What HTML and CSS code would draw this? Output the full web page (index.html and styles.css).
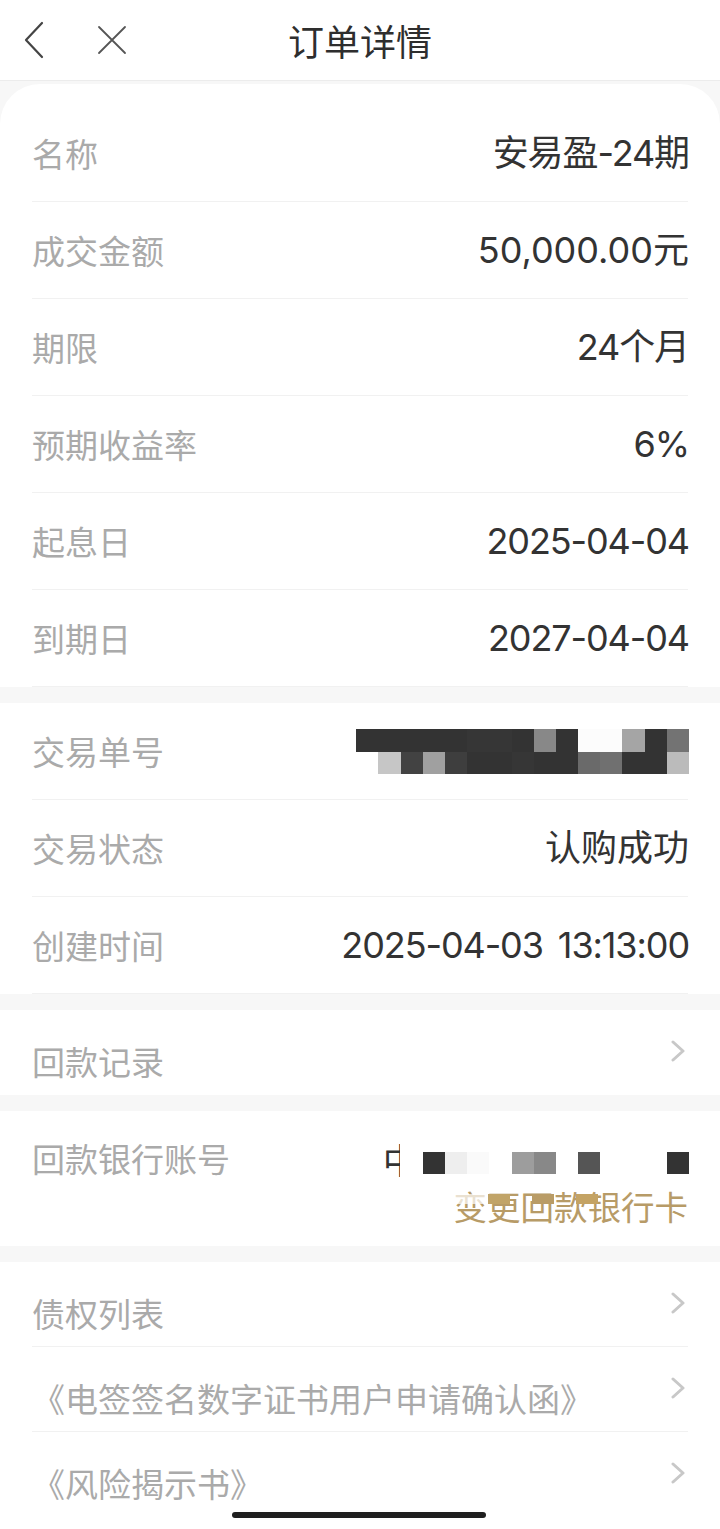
FILE: index.html
```html
<!DOCTYPE html>
<html lang="zh-CN">
<head>
<meta charset="UTF-8" />
<title>订单详情</title>
<link rel="stylesheet" href="styles.css">
</head>
<body>
<header class="nav">
  <div class="nav-left">
    <svg class="icon-back" width="22" height="38" viewBox="0 0 22 38"><path d="M19 2 L3 19 L19 36" fill="none" stroke="#444" stroke-width="2.2" stroke-linecap="round" stroke-linejoin="round"/></svg>
    <svg class="icon-close" width="30" height="30" viewBox="0 0 30 30"><path d="M2 2 L28 28 M28 2 L2 28" fill="none" stroke="#555" stroke-width="1.8" stroke-linecap="round"/></svg>
  </div>
  <h1 class="title">订单详情</h1>
  <div></div>
</header>

<section class="group card">
  <div class="row"><span class="label">名称</span><span class="value">安易盈-24期</span></div>
  <div class="row"><span class="label">成交金额</span><span class="value wide">50,000.00元</span></div>
  <div class="row"><span class="label">期限</span><span class="value">24个月</span></div>
  <div class="row"><span class="label">预期收益率</span><span class="value">6%</span></div>
  <div class="row"><span class="label">起息日</span><span class="value">2025-04-04</span></div>
  <div class="row"><span class="label">到期日</span><span class="value">2027-04-04</span></div>
</section>

<section class="group">
  <div class="row">
    <span class="label">交易单号</span>
    <div class="mosaic">
      <i class="c33"></i><i class="c33"></i><i class="c33"></i><i class="c33"></i><i class="c33"></i><i class="c36"></i><i class="c36"></i><i class="c33"></i><i class="c88"></i><i class="c33"></i><i class="cfc"></i><i class="cfc"></i><i class="ca5"></i><i class="c33"></i><i class="c73"></i>
      <i></i><i class="cc6"></i><i class="c42"></i><i class="ca0"></i><i class="c3e"></i><i class="c33"></i><i class="c33"></i><i class="c36"></i><i class="c33"></i><i class="c33"></i><i class="c6a"></i><i class="c70"></i><i class="c33"></i><i class="c33"></i><i class="cbb"></i>
    </div>
  </div>
  <div class="row"><span class="label">交易状态</span><span class="value cjk">认购成功</span></div>
  <div class="row"><span class="label">创建时间</span><span class="value">2025-04-03 13:13:00</span></div>
</section>

<section class="group">
  <div class="link"><span class="label">回款记录</span><svg class="arrow" width="16" height="22" viewBox="0 0 16 22"><path d="M3 2 L13 11 L3 20" fill="none" stroke="#c8c8c8" stroke-width="3" stroke-linecap="round" stroke-linejoin="round"/></svg></div>
</section>

<section class="group">
  <div class="bank">
    <span class="label">回款银行账号</span>
    <div class="bank-value">
      <div class="acct">
        <span class="clip">中</span>
        <div class="mosaic small">
          <i class="c33"></i><i class="cee"></i><i class="cfa"></i><i></i><i class="c9d"></i><i class="c88"></i><i></i><i class="c55"></i><i></i><i></i><i></i><i class="c33"></i>
        </div>
      </div>
      <div class="change">
        <span>变更回款银行卡</span>
        <div class="smudge"><i class="w"></i><i class="g1"></i><i></i><i class="g2"></i><i></i><i class="g3"></i></div>
      </div>
    </div>
  </div>
</section>

<section class="group last">
  <div class="link"><span class="label">债权列表</span><svg class="arrow" width="16" height="22" viewBox="0 0 16 22"><path d="M3 2 L13 11 L3 20" fill="none" stroke="#c8c8c8" stroke-width="3" stroke-linecap="round" stroke-linejoin="round"/></svg></div>
  <div class="link"><span class="label">《电签签名数字证书用户申请确认函》</span><svg class="arrow" width="16" height="22" viewBox="0 0 16 22"><path d="M3 2 L13 11 L3 20" fill="none" stroke="#c8c8c8" stroke-width="3" stroke-linecap="round" stroke-linejoin="round"/></svg></div>
  <div class="link"><span class="label">《风险揭示书》</span><svg class="arrow" width="16" height="22" viewBox="0 0 16 22"><path d="M3 2 L13 11 L3 20" fill="none" stroke="#c8c8c8" stroke-width="3" stroke-linecap="round" stroke-linejoin="round"/></svg></div>
</section>

<div class="home-bar"></div>
</body>
</html>
```

FILE: styles.css
```css
body { margin: 0; background: #f7f7f7; font-family: "Inter", "Noto Sans CJK SC", sans-serif; color: #333; }

.nav { display: grid; grid-template-columns: 1fr auto 1fr; align-items: center; height: 81px; background: #fff; border-bottom: 1px solid #ececec; box-sizing: border-box; }
.nav-left { display: flex; align-items: center; padding-left: 23px; }
.icon-close { margin-left: 52px; }
.title { margin: 0; font-family: "Noto Sans CJK SC", sans-serif; font-size: 36px; font-weight: 400; color: #2e2e2e; line-height: 40px; }

.group { background: #fff; margin-top: 16px; padding: 0 32px; }
.card { margin-top: 3px; padding-top: 21px; border-radius: 40px 40px 0 0; }
.last { padding-bottom: 12px; }

.row { display: flex; justify-content: space-between; align-items: center; height: 97px; border-bottom: 1px solid #f1f1f1; box-sizing: border-box; }

.label { font-family: "Noto Sans CJK SC", sans-serif; font-size: 33px; line-height: 40px; color: #aaa; }
.value { font-size: 36px; line-height: 40px; color: #333; letter-spacing: -1.1px; word-spacing: 6px; margin-right: -1px; }
.value.wide { letter-spacing: 0; }
.value.cjk { letter-spacing: 0; }

.mosaic { display: grid; grid-template-columns: repeat(15, 22.2px); grid-template-rows: 23px 22px; margin-right: -1px; }
.mosaic.small { grid-template-columns: repeat(12, 22.2px); grid-template-rows: 22px; }
.mosaic i { display: block; }
.c33 { background: #333; }
.c36 { background: #363636; }
.c3e { background: #3e3e3e; }
.c42 { background: #424242; }
.c55 { background: #555; }
.c6a { background: #6a6a6a; }
.c70 { background: #707070; }
.c73 { background: #737373; }
.c88 { background: #888; }
.c9d { background: #9d9d9d; }
.ca0 { background: #a0a0a0; }
.ca5 { background: #a5a5a5; }
.cbb { background: #bbb; }
.cc6 { background: #c6c6c6; }
.cee { background: #eee; }
.cfa { background: #fafafa; }
.cfc { background: #fcfcfc; }

.link { display: flex; justify-content: space-between; align-items: flex-start; height: 85px; padding-top: 31px; box-sizing: border-box; border-bottom: 1px solid #f1f1f1; }
.link:last-child { border-bottom: none; }
.arrow { margin-top: -1px; margin-right: 2px; }

.bank { display: flex; justify-content: space-between; align-items: flex-start; height: 135px; padding-top: 27px; box-sizing: border-box; }
.bank-value { display: flex; flex-direction: column; align-items: flex-end; margin-top: 14px; }
.acct { display: flex; align-items: center; height: 22px; }
.clip { display: block; width: 17px; height: 36px; overflow: hidden; font-family: "Noto Sans CJK SC", sans-serif; font-size: 36px; line-height: 36px; color: #333; margin-top: -8px; margin-right: 23px; }
.change { position: relative; margin-top: 12px; font-family: "Noto Sans CJK SC", sans-serif; font-size: 33.5px; line-height: 40px; color: #b79b67; }
.smudge { position: absolute; left: 0; top: 8px; display: grid; grid-template-columns: 34px 22px 22px 22px 22px 22px; grid-template-rows: 10px; }
.smudge i { display: block; }
.smudge .w { background: rgba(255,255,255,0.7); }
.g1 { background: #c1a468; }
.g2 { background: #b99c66; }
.g3 { background: #c4a364; }

.home-bar { position: fixed; left: 232px; bottom: 11px; width: 254px; height: 6px; border-radius: 3px; background: #1f1f1f; }
```
